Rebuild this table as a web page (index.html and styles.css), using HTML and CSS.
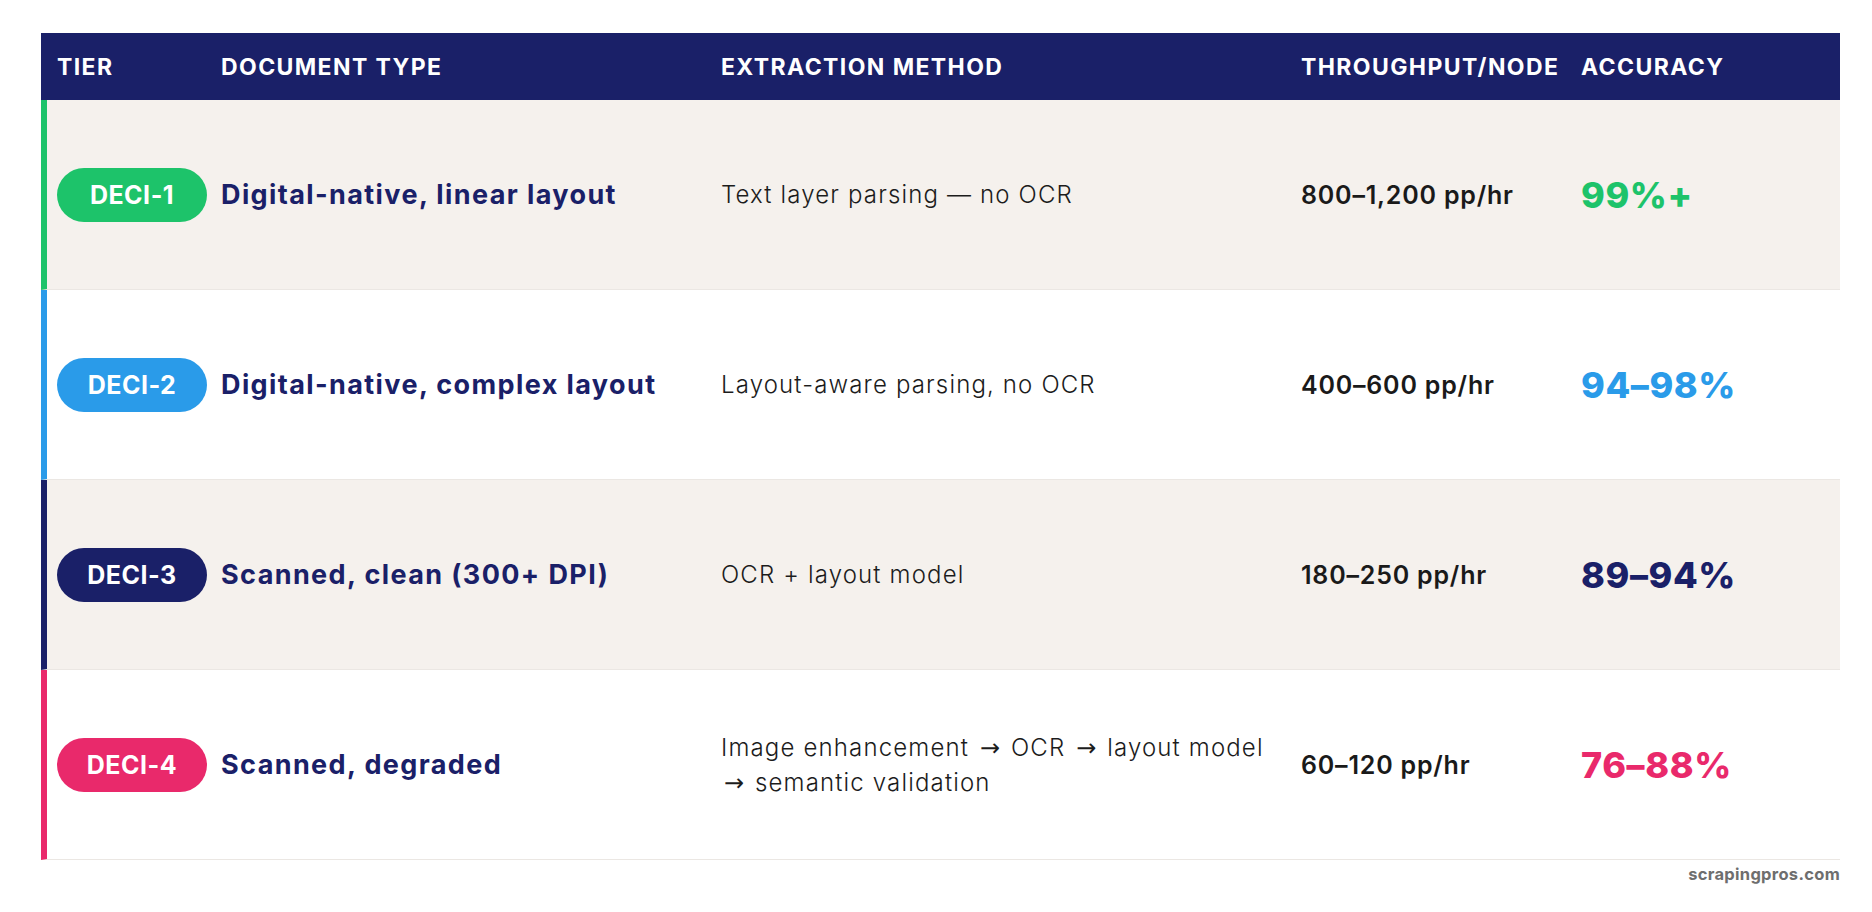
FILE: index.html
```html
<!DOCTYPE html>
<html lang="en">
<head>
<meta charset="utf-8">
<title>DECI tiers</title>
<link rel="stylesheet" href="styles.css">
</head>
<body>
<div class="wrap">
  <div class="table">
    <div class="row head">
      <div class="cell">TIER</div>
      <div class="cell">DOCUMENT TYPE</div>
      <div class="cell">EXTRACTION METHOD</div>
      <div class="cell">THROUGHPUT/NODE</div>
      <div class="cell">ACCURACY</div>
    </div>
    <div class="row t1 alt">
      <div class="cell"><span class="pill">DECI-1</span></div>
      <div class="cell doc">Digital-native, linear layout</div>
      <div class="cell method">Text layer parsing — no OCR</div>
      <div class="cell thr">800–1,200 pp/hr</div>
      <div class="cell acc">99%+</div>
    </div>
    <div class="row t2">
      <div class="cell"><span class="pill">DECI-2</span></div>
      <div class="cell doc">Digital-native, complex layout</div>
      <div class="cell method">Layout-aware parsing, no OCR</div>
      <div class="cell thr">400–600 pp/hr</div>
      <div class="cell acc">94–98%</div>
    </div>
    <div class="row t3 alt">
      <div class="cell"><span class="pill">DECI-3</span></div>
      <div class="cell doc">Scanned, clean (300+ DPI)</div>
      <div class="cell method">OCR + layout model</div>
      <div class="cell thr">180–250 pp/hr</div>
      <div class="cell acc">89–94%</div>
    </div>
    <div class="row t4">
      <div class="cell"><span class="pill">DECI-4</span></div>
      <div class="cell doc">Scanned, degraded</div>
      <div class="cell method">Image enhancement <span class="arr">→</span> OCR <span class="arr">→</span> layout model<br><span class="arr">→</span> semantic validation</div>
      <div class="cell thr">60–120 pp/hr</div>
      <div class="cell acc">76–88%</div>
    </div>
  </div>
  <div class="source">scrapingpros.com</div>
</div>
</body>
</html>
```

FILE: styles.css
```css
* { box-sizing: border-box; }
html, body { margin: 0; padding: 0; background: #ffffff; }
body { font-family: Inter, "Liberation Sans", sans-serif; }

.wrap {
  margin: 33px 32px 0 41px;
}

.table {
  display: flex;
  flex-direction: column;
}

.row {
  display: grid;
  grid-template-columns: 164px 500px 580px 280px 1fr;
  align-items: center;
  border-left: 6px solid var(--c);
  background: #ffffff;
}

.row.alt { background: #f5f1ed; }

.row .cell { padding-left: 10px; white-space: nowrap; }

.head {
  --c: #1a2068;
  background: #1a2068;
  height: 67px;
  color: #ffffff;
  font-weight: 700;
  font-size: 23px;
  letter-spacing: 1.4px;
}

.t1 { --c: #1dc36a; }
.t2 { --c: #2a9be9; }
.t3 { --c: #1a2068; }
.t4 { --c: #e9296b; }

.row:not(.head) {
  height: 190px;
  border-bottom: 1px solid #ebe7e3;
}

.pill {
  display: flex;
  align-items: center;
  justify-content: center;
  width: 150px;
  height: 54px;
  border-radius: 27px;
  background: var(--c);
  color: #ffffff;
  font-weight: 700;
  font-size: 25px;
  letter-spacing: 0.5px;
}

.doc {
  color: #1a2068;
  font-weight: 700;
  font-size: 27px;
  letter-spacing: 1.4px;
}

.method {
  color: #1c1c1c;
  font-weight: 300;
  font-size: 24px;
  line-height: 35px;
  letter-spacing: 1.15px;
}

.arr {
  font-family: "DejaVu Sans", sans-serif;
  font-weight: 400;
  font-size: 24px;
  line-height: 1;
  letter-spacing: 0;
  margin: 0 3px;
}

.thr {
  color: #1a1a1a;
  font-weight: 600;
  font-size: 25px;
  letter-spacing: 0.8px;
}

.acc {
  color: var(--c);
  font-weight: 800;
  font-size: 36px;
  letter-spacing: 0.6px;
}

.source {
  text-align: right;
  color: #6e6e6e;
  font-weight: 700;
  font-size: 16.5px;
  letter-spacing: 0.3px;
  margin-top: 4px;
}
```
